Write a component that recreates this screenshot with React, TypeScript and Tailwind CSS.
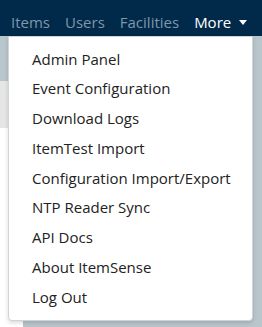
const items = [
  'Admin Panel',
  'Event Configuration',
  'Download Logs',
  'ItemTest Import',
  'Configuration Import/Export',
  'NTP Reader Sync',
  'API Docs',
  'About ItemSense',
  'Log Out',
];

export default function App() {
  return (
    <div className="relative w-[262px] h-[327px] overflow-hidden bg-white" style={{ fontFamily: '"Open Sans", sans-serif' }}>
      {/* Navbar */}
      <nav className="h-[36px] bg-[#012a4a] flex items-center pt-[8px] pl-[11px] gap-[15px] text-[15px]">
        <span className="text-[#7f97aa]">Items</span>
        <span className="text-[#7f97aa]">Users</span>
        <span className="text-[#7f97aa]">Facilities</span>
        <span className="text-white flex items-center gap-[8px]">
          More
          <span className="w-0 h-0 border-l-[4px] border-r-[4px] border-t-[5px] border-l-transparent border-r-transparent border-t-white" />
        </span>
      </nav>

      {/* Page body */}
      <div className="flex h-[291px]">
        <div className="w-[23px] flex flex-col">
          <div className="h-[45px] bg-[#b9c6cc]" />
          <div className="h-[47px] bg-[#e6e6e6]" />
          <div className="flex-1 bg-white" />
        </div>
        <div className="flex-1 bg-[#b9c6cc]" />
      </div>

      {/* Dropdown menu */}
      <div className="absolute left-[8px] top-[36px] w-[245px] bg-white border border-[#cfd4d7] rounded-b-[4px] shadow-[0_2px_4px_rgba(0,0,0,0.15)] pt-[7px] pb-[8px]">
        {items.map((item) => (
          <div key={item} className="h-[29.75px] flex items-center pl-[23px] text-[15px] text-[#222]">
            {item}
          </div>
        ))}
      </div>
    </div>
  );
}
